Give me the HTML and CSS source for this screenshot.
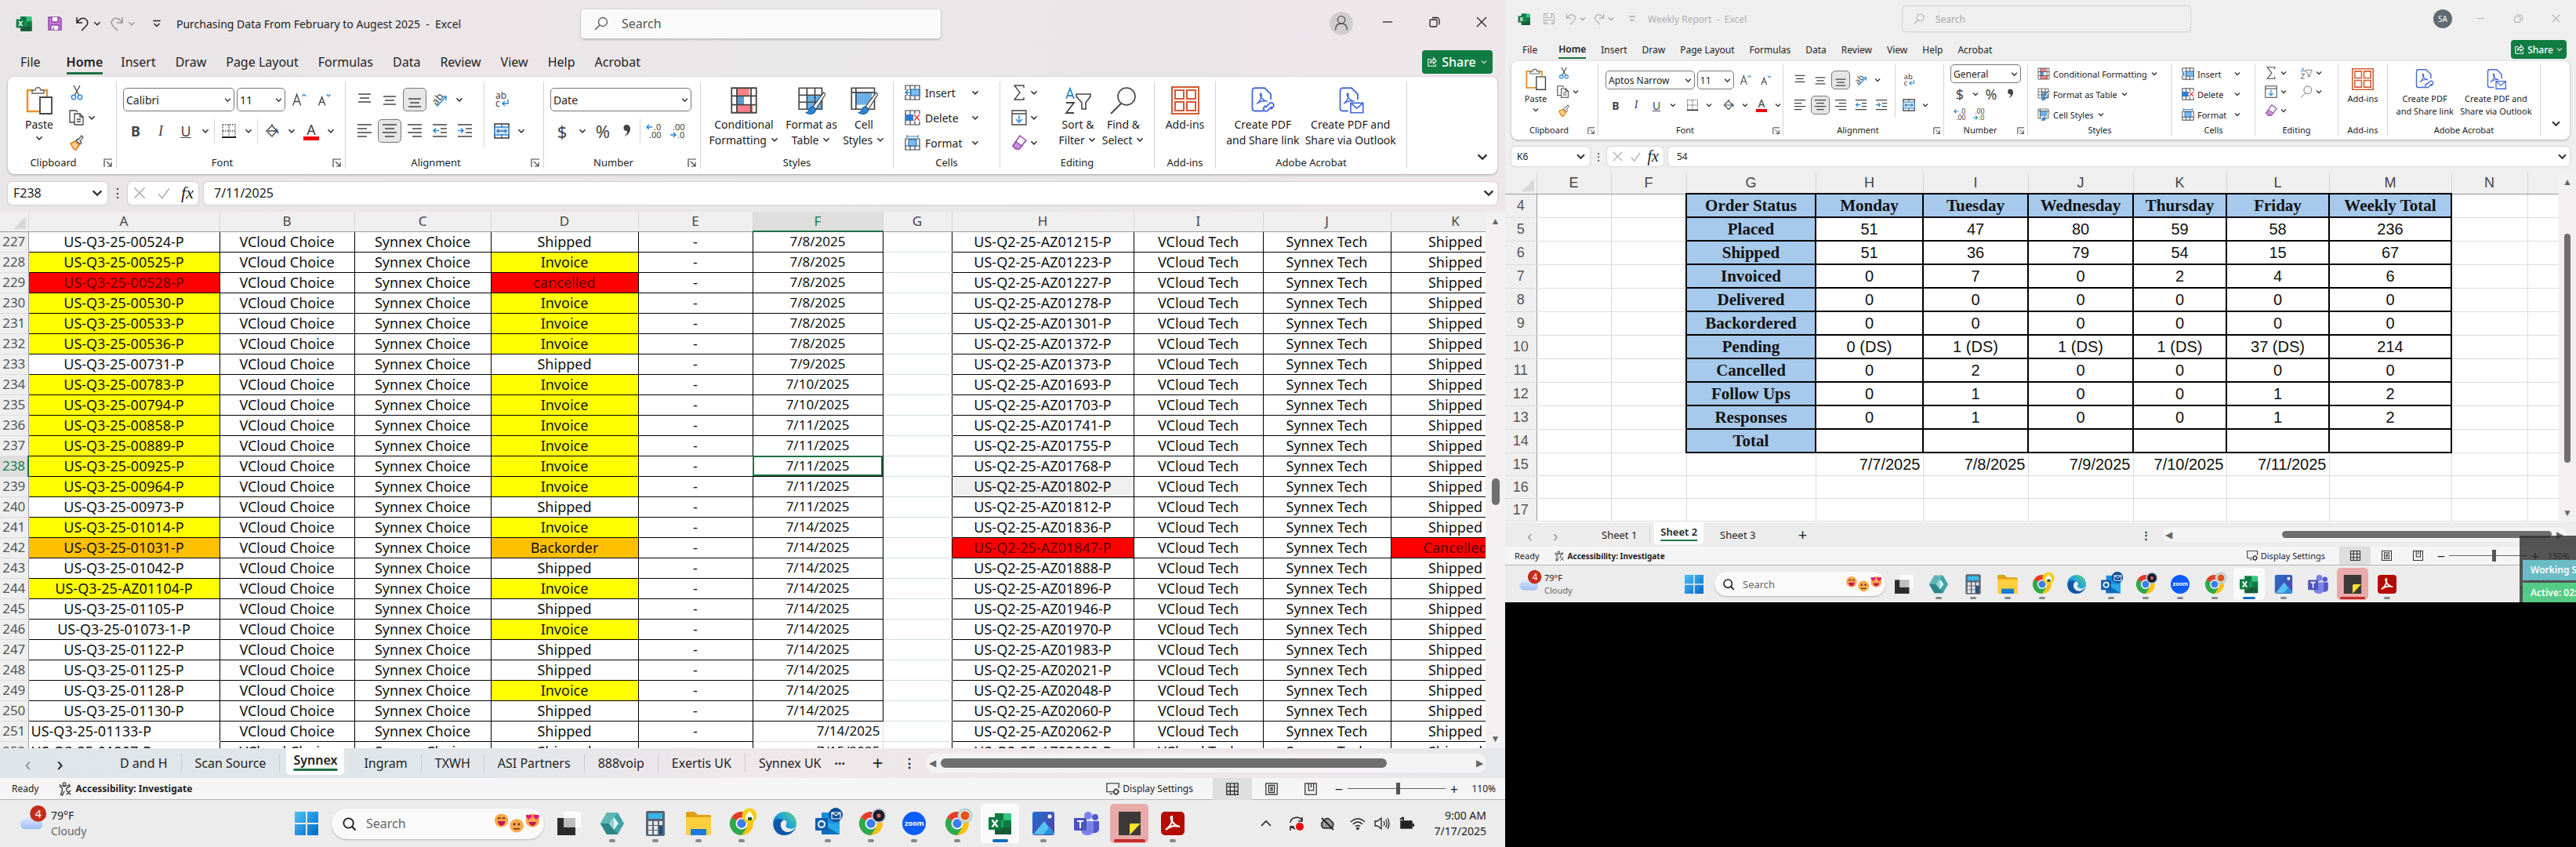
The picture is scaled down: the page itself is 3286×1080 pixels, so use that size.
FILE: index.html
```html
<!DOCTYPE html>
<html lang="en">
<head>
  <meta charset="UTF-8" />
  <meta name="viewport" content="width=device-width, initial-scale=1.0"/>
  <title>Purchasing Data - Excel</title>
  <link rel="stylesheet" href="styles.css">
</head>
<body>

  <svg class="sprite" aria-hidden="true">
    <defs>
      <linearGradient id="g-win" x1="0" y1="0" x2="1" y2="1"><stop offset="0" stop-color="#4cc2f5"/><stop offset="1" stop-color="#0067c8"/></linearGradient>
      <linearGradient id="g-edge" x1="0" y1="1" x2="1" y2="0"><stop offset="0" stop-color="#0c59a4"/><stop offset=".5" stop-color="#1b9de2"/><stop offset="1" stop-color="#5fd67b"/></linearGradient>
      <linearGradient id="g-photo" x1="0" y1="0" x2="1" y2="1"><stop offset="0" stop-color="#1f6fd0"/><stop offset="1" stop-color="#5b3fa8"/></linearGradient>
      <linearGradient id="g-cloud" x1="0" y1="0" x2="0" y2="1"><stop offset="0" stop-color="#f4f7ff"/><stop offset="1" stop-color="#9dbdf2"/></linearGradient>
    </defs>
  </svg>

  <!-- Icon set -->
  <svg class="icons" aria-hidden="true">
    <symbol id="chev" viewBox="0 0 10 10"><path d="M2 3.5 5 6.5 8 3.5" fill="none" stroke="#333" stroke-width="1.3"/></symbol>
    <symbol id="excel" viewBox="0 0 32 32"><path d="M9 3h14l7 7v19a1 1 0 0 1-1 1H9z" fill="#21a366"/><path d="M9 3h11v9H9z" fill="#107c41"/><path d="M20 3h9a1 1 0 0 1 1 1v8H20z" fill="#33c481"/><path d="M20 12h10v9H20z" fill="#107c41"/><path d="M9 21h21v8a1 1 0 0 1-1 1H9z" fill="#185c37"/><rect x="1" y="8" width="16" height="16" rx="1" fill="#107c41"/><path d="m5.5 11.5 7 9m0-9-7 9" stroke="#fff" stroke-width="2.2"/></symbol>
    <symbol id="save" viewBox="0 0 20 20"><path d="M2 2h14l2 2v14H2z" stroke="currentColor" stroke-width="1.4"/><path d="M6 2v6h8V2M5 18v-6h10v6M8 18v-3" fill="#f6f2f6" stroke="currentColor" stroke-width="1.3"/></symbol>
    <symbol id="undo" viewBox="0 0 20 20"><path d="M3 2v7h7M3.500 8.500C7 3 12 2 15 5s2 6-1 9l-5 5" fill="none" stroke="currentColor" stroke-width="1.5"/></symbol>
    <symbol id="redo" viewBox="0 0 20 20"><path d="M17 2v7h-7M16.500 8.500C13 3 8 2 5 5s-2 6 1 9l5 5" fill="none" stroke="currentColor" stroke-width="1.5"/></symbol>
    <symbol id="custom" viewBox="0 0 12 12"><path d="M2 3h8M3 6l3 3 3-3" fill="none" stroke="currentColor" stroke-width="1.3"/></symbol>
    <symbol id="glass" viewBox="0 0 20 20"><circle cx="12" cy="8" r="5.5" fill="none" stroke="currentColor" stroke-width="1.3"/><path d="m8 12-6 6" stroke="currentColor" stroke-width="1.5"/></symbol>
    <symbol id="person" viewBox="0 0 32 32"><circle cx="16" cy="16" r="16" fill="#cfcdcd"/><circle cx="16" cy="11" r="5" fill="none" stroke="#555" stroke-width="1.5"/><path d="M8 25c0-6 3-9 8-9s8 3 8 9" fill="none" stroke="#555" stroke-width="1.5"/></symbol>
    <symbol id="min" viewBox="0 0 16 16"><path d="M2 8h12" stroke="currentColor" stroke-width="1.3"/></symbol>
    <symbol id="max" viewBox="0 0 16 16"><rect x="2" y="5" width="9" height="9" rx="1.5" fill="none" stroke="currentColor" stroke-width="1.3"/><path d="M5 2.5h6a3 3 0 0 1 3 3v6" fill="none" stroke="currentColor" stroke-width="1.3"/></symbol>
    <symbol id="close" viewBox="0 0 16 16"><path d="m2 2 12 12m0-12L2 14" stroke="currentColor" stroke-width="1.3"/></symbol>
    <symbol id="check" viewBox="0 0 16 16"><path d="m2 9 4 5 8-11" fill="none" stroke="currentColor" stroke-width="1.3"/></symbol>
    <symbol id="share" viewBox="0 0 16 16"><path d="M6 4H2v10h11v-3M5 10c0-4 2-5 5-5V2l4 4.500-4 4V8c-2 0-4 0-5 2z" fill="none" stroke="#fff" stroke-width="1.2"/></symbol>

    <symbol id="paste" viewBox="0 0 36 36"><path d="M10 5H3v27h15" fill="none" stroke="#e8912d" stroke-width="2.5"/><path d="M22 5h6v8" fill="none" stroke="#e8912d" stroke-width="2.5"/><path d="M9 9V5h4a3.500 3.500 0 0 1 7 0h4v4z" fill="#fff" stroke="#666" stroke-width="1.5"/><path d="M19 14h15v21H19z" fill="#fff" stroke="#444" stroke-width="1.8"/></symbol>
    <symbol id="cut" viewBox="0 0 20 20"><path d="m6 1 7 13M14 1 7 14" stroke="#444" stroke-width="1.3"/><circle cx="6" cy="16" r="2.7" fill="none" stroke="#2b88d8" stroke-width="1.5"/><circle cx="14" cy="16" r="2.7" fill="none" stroke="#2b88d8" stroke-width="1.5"/></symbol>
    <symbol id="copy" viewBox="0 0 20 20"><path d="M7 16H1V1h8l2 2" fill="none" stroke="#444" stroke-width="1.3"/><path d="M7 5h7l4 4v10H7zM14 5v4h4M10 12h5M10 15h5" fill="#fff" stroke="#444" stroke-width="1.3"/></symbol>
    <symbol id="painter" viewBox="0 0 20 20"><path d="m2 11 6-3 5 5-4 6-3-1z" fill="#fbd08f" stroke="#e07b1a" stroke-width="1.5"/><path d="m9 7 5 5 2-2-2-2 4-5-2-2-4 5-1-1z" fill="#fff" stroke="#444" stroke-width="1.2"/></symbol>
    <symbol id="launch" viewBox="0 0 12 12"><path d="M1 11V1h10M4 4l6 6M10 5v5H5" fill="none" stroke="#444" stroke-width="1.2"/></symbol>
    <symbol id="borders" viewBox="0 0 20 20"><path d="M2 2h16v15M2 2v15M10 2v15M2 10h16" fill="none" stroke="#444" stroke-width="1.3" stroke-dasharray="1.5 1.5"/><path d="M1 18h18" stroke="#222" stroke-width="2"/></symbol>
    <symbol id="bucket" viewBox="0 0 20 20"><path d="m3 10 7-7 6 7-6 7zM10 3V1M5 10h10" fill="none" stroke="#444" stroke-width="1.4"/><path d="M15 6c3 2 4 5 3 8-2-1-2-4-3-8z" fill="#2b6cb0"/></symbol>
    <symbol id="a-up" viewBox="0 0 24 24"><path d="m2 21 6-17 6 17M4 15h8" fill="none" stroke="#444" stroke-width="1.6"/><path d="m16 7 3-3 3 3" fill="none" stroke="#2b88d8" stroke-width="1.6"/></symbol>
    <symbol id="a-down" viewBox="0 0 24 24"><path d="m3 21 5-13 5 13M5 16h6" fill="none" stroke="#444" stroke-width="1.6"/><path d="m15 4 3 3 3-3" fill="none" stroke="#2b88d8" stroke-width="1.6"/></symbol>
    <symbol id="al-top" viewBox="0 0 20 20"><path d="M2 3h16M4 8h12M2 13h16" stroke="#444" stroke-width="1.5"/></symbol>
    <symbol id="al-mid" viewBox="0 0 20 20"><path d="M2 6h16M4 11h12M2 16h16" stroke="#444" stroke-width="1.5"/></symbol>
    <symbol id="al-bot" viewBox="0 0 20 20"><path d="M2 9h16M4 14h12M2 19h16" stroke="#444" stroke-width="1.5"/></symbol>
    <symbol id="al-left" viewBox="0 0 20 20"><path d="M1 2h18M1 7h12M1 12h18M1 17h12" stroke="#444" stroke-width="1.5"/></symbol>
    <symbol id="al-center" viewBox="0 0 20 20"><path d="M1 2h18M4 7h12M1 12h18M4 17h12" stroke="#444" stroke-width="1.5"/></symbol>
    <symbol id="al-right" viewBox="0 0 20 20"><path d="M1 2h18M7 7h12M1 12h18M7 17h12" stroke="#444" stroke-width="1.5"/></symbol>
    <symbol id="outdent" viewBox="0 0 20 20"><path d="M1 2h18M11 7h8M11 12h8M1 17h18" stroke="#444" stroke-width="1.5"/><path d="M9 9.500H2m3-3-3 3 3 3" fill="none" stroke="#2b88d8" stroke-width="1.5"/></symbol>
    <symbol id="indent" viewBox="0 0 20 20"><path d="M1 2h18M11 7h8M11 12h8M1 17h18" stroke="#444" stroke-width="1.5"/><path d="M1 9.500h7m-3-3 3 3-3 3" fill="none" stroke="#2b88d8" stroke-width="1.5"/></symbol>
    <symbol id="orient" viewBox="0 0 20 20"><text x="0" y="14" font-size="13" fill="#444" transform="rotate(-50 7 10)">ab</text><path d="M6 19 18 6m-5 0h5v5" fill="none" stroke="#2b88d8" stroke-width="1.4"/></symbol>
    <symbol id="wrap" viewBox="0 0 20 20"><text x="2" y="9" font-size="12" fill="#444">ab</text><text x="2" y="19" font-size="12" fill="#444">c</text><path d="M18 10v5h-7m3-3-3 3 3 3" fill="none" stroke="#2b88d8" stroke-width="1.5"/></symbol>
    <symbol id="merge" viewBox="0 0 20 20"><path d="M1 1h18v18H1z" fill="#fff" stroke="#333" stroke-width="1.5"/><path d="M1 5h18v10H1z" fill="#cfe6f8" stroke="#2b88d8" stroke-width="1.3"/><path d="M10 1v4M10 15v4" stroke="#333"/><path d="M4 10h12M6 8l-2 2 2 2m8-4 2 2-2 2" fill="none" stroke="#2b6cb0" stroke-width="1.3"/></symbol>
    <symbol id="dec-more" viewBox="0 0 20 20"><path d="M8 5H1m3-3L1 5l3 3" fill="none" stroke="#2b88d8" stroke-width="1.5"/><text x="10" y="9" font-size="11" fill="#444">.0</text><text x="4" y="19" font-size="11" fill="#444">.00</text></symbol>
    <symbol id="dec-less" viewBox="0 0 20 20"><text x="4" y="9" font-size="11" fill="#444">.00</text><path d="M1 15h7m-3-3 3 3-3 3" fill="none" stroke="#2b88d8" stroke-width="1.5"/><text x="10" y="19" font-size="11" fill="#444">.0</text></symbol>
    <symbol id="comma" viewBox="0 0 20 20"><path d="M10 2a4 4 0 1 0 1 8c0 3-1 5-4 7 6-2 8-6 8-10 0-3-2-5-5-5z" fill="#444"/></symbol>

    <symbol id="cond" viewBox="0 0 32 32"><path d="M2 2h28v28H2z" fill="#fff"/><path d="M8 2h14v9H8zM8 21h18v9H8z" fill="#ff8288"/><path d="M8 11h8v10H8z" fill="#5b9bd5"/><path d="M2 2h28v28H2zM2 11h28M2 21h28M8 2v28M24 2v28" fill="none" stroke="#444" stroke-width="1.6"/></symbol>
    <symbol id="fmt-table" viewBox="0 0 32 32"><path d="M2 2h26v24H2z" fill="#fff"/><path d="M11 10h17v16H11z" fill="#69b0e8"/><path d="M2 2h26v24H2zM2 10h26M2 18h26M11 2v24M20 2v24" fill="none" stroke="#444" stroke-width="1.5"/><path d="m30 7-12 16 3 3L32 9z" fill="#fff" stroke="#444"/><path d="M17 23c-4 1-2 6-7 7 5 3 11 1 11-4z" fill="#2b88d8" stroke="#1f5f9f"/></symbol>
    <symbol id="cell-style" viewBox="0 0 32 32"><path d="M2 2h26v24H2z" fill="#fff"/><path d="M7 7h18v14H7z" fill="#69b0e8"/><path d="M2 2h26v24H2zM2 7h26M7 2v24" fill="none" stroke="#444" stroke-width="1.5"/><path d="m30 7-12 16 3 3L32 9z" fill="#fff" stroke="#444"/><path d="M17 23c-4 1-2 6-7 7 5 3 11 1 11-4z" fill="#2b88d8" stroke="#1f5f9f"/></symbol>
    <symbol id="ins" viewBox="0 0 20 20"><path d="M1 1h18v18H1zM7 1v18M13 1v18M1 7h18M1 13h18" fill="#fff" stroke="#444" stroke-width="1.2"/><path d="M8 6h11v8H8z" fill="#7dbcf0" stroke="#1f5f9f"/><path d="M0 7h7v6H0z" fill="#fff"/><path d="M8 10H1m3-3-3 3 3 3" fill="none" stroke="#2b88d8" stroke-width="1.5"/></symbol>
    <symbol id="del" viewBox="0 0 20 20"><path d="M1 1h18v18H1zM7 1v18M13 1v18M1 7h18M1 13h18" fill="#fff" stroke="#444" stroke-width="1.2"/><path d="M1 6h10v8H1z" fill="#2b7cd3"/><path d="M11 5h9v10h-9z" fill="#fff"/><path d="m12 6 7 8m0-8-7 8" stroke="#e03c31" stroke-width="1.5"/></symbol>
    <symbol id="fmt" viewBox="0 0 20 20"><path d="M1 5h18v14H1zM7 5v14M13 5v14M1 14h18" fill="#fff" stroke="#444" stroke-width="1.2"/><path d="M5 6h10v8H5z" fill="#7dbcf0" stroke="#1f5f9f"/><path d="M3 2h14M3 0v4M17 0v4" stroke="#2b88d8" stroke-width="1.2"/></symbol>
    <symbol id="sum" viewBox="0 0 20 20"><path d="M16 4V1H4l7 9-7 9h12v-3" fill="none" stroke="#444" stroke-width="1.4"/></symbol>
    <symbol id="filldown" viewBox="0 0 20 20"><path d="M1 1h18v18H1zM1 5h18" fill="#fff" stroke="#444" stroke-width="1.3"/><path d="M10 7v9m-4-4 4 4 4-4" fill="none" stroke="#2b88d8" stroke-width="1.5"/></symbol>
    <symbol id="erase" viewBox="0 0 20 20"><path d="M11 1 19 7l-9 11H6L2 14z" fill="#fff" stroke="#8f3ea8" stroke-width="1.4"/><path d="m6 9 8 5-4 4H6l-4-4z" fill="#c792d8" stroke="#8f3ea8" stroke-width="1.2"/></symbol>
    <symbol id="sort" viewBox="0 0 36 36"><path d="m3 16 5-13 5 13M5 12h6" fill="none" stroke="#2b88d8" stroke-width="1.8"/><path d="M3 21h10L3 34h10" fill="none" stroke="#444" stroke-width="1.8"/><path d="M16 10h18v3l-6 8v8h-5v-8l-7-8z" fill="#fff" stroke="#444" stroke-width="1.6"/></symbol>
    <symbol id="find" viewBox="0 0 36 36"><circle cx="22" cy="13" r="11" fill="#fafafa" stroke="#444" stroke-width="1.6"/><path d="M15 22 2 35" stroke="#444" stroke-width="1.8"/></symbol>
    <symbol id="addins" viewBox="0 0 36 36"><path d="M1 1h34v34H1zM5 5h11v11H5zM20 5h11v11H20zM5 20h11v11H5zM20 20h11v11H20z" fill="none" stroke="#d65a31" stroke-width="2"/></symbol>
    <symbol id="pdf-link" viewBox="0 0 32 32"><path d="M17 28H7a3 3 0 0 1-3-3V5a3 3 0 0 1 3-3h11l7 7v6" fill="none" stroke="#4468d8" stroke-width="1.6"/><path d="M9 20c5-4 6-9 5-12-3 0 0 8 7 9-5-1-9 0-12 3z" fill="none" stroke="#4468d8" stroke-width="1.3"/><path d="m19 24 5-5a3 3 0 0 1 4 4l-3 3M26 23l-5 5a3 3 0 0 1-4-4l2-2" fill="none" stroke="#4468d8" stroke-width="1.6"/></symbol>
    <symbol id="pdf-mail" viewBox="0 0 32 32"><path d="M13 28H7a3 3 0 0 1-3-3V5a3 3 0 0 1 3-3h10l7 7v6" fill="none" stroke="#4468d8" stroke-width="1.6"/><path d="M8 20c5-4 6-9 5-12-3 0 0 8 7 9-5-1-9 0-12 3z" fill="none" stroke="#4468d8" stroke-width="1.3"/><path d="M16 19h14v11H16zl7 6 7-6" fill="#fff" stroke="#4468d8" stroke-width="1.5"/></symbol>

    <symbol id="a11y" viewBox="0 0 20 20"><circle cx="9" cy="3" r="2" fill="none" stroke="#333" stroke-width="1.3"/><path d="M2 4c4 3 10 3 14 0l1 2-5 3v3M6 9 2 6M6 8v4l-2 6 2 1 3-6M12 12l6 6m0-6-6 6" fill="none" stroke="#333" stroke-width="1.4"/></symbol>
    <symbol id="display" viewBox="0 0 20 20"><path d="M9 14H1V2h17v7M5 17h4" fill="none" stroke="#444" stroke-width="1.5"/><circle cx="14" cy="14" r="3" fill="none" stroke="#333" stroke-width="1.5"/><path d="M14 9v2M14 17v2M9 14h2M17 14h2M11 11l1 1M16 16l1 1M17 11l-1 1M12 16l-1 1" stroke="#333" stroke-width="1.5"/></symbol>
    <symbol id="v-normal" viewBox="0 0 20 20"><path d="M2 2h16v16H2zM7 2v16M13 2v16M2 7h16M2 13h16" fill="none" stroke="#333" stroke-width="1.5"/></symbol>
    <symbol id="v-page" viewBox="0 0 20 20"><path d="M2 2h16v16H2zM6 5h8v10H6zM8 8h4M8 10h4M8 12h4" fill="none" stroke="#333" stroke-width="1.4"/></symbol>
    <symbol id="v-break" viewBox="0 0 20 20"><path d="M2 2h16v16H2zM7 2v10h7V2M10.500 2v6" fill="none" stroke="#333" stroke-width="1.4"/></symbol>

    <!-- Taskbar -->
    <symbol id="weather" viewBox="0 0 40 40"><path d="M10 33a7 7 0 0 1 0-14c1-6 6-8 11-7 5 1 7 5 7 8 6 1 7 13-1 13z" fill="url(#g-cloud)"/><circle cx="27" cy="12" r="11" fill="#c42b1c"/><text x="23" y="18" font-size="15" fill="#fff">4</text></symbol>
    <symbol id="start" viewBox="0 0 40 40"><path d="M5 5h14v14H5zM21 5h14v14H21zM5 21h14v14H5zM21 21h14v14H21z" fill="url(#g-win)"/></symbol>
    <symbol id="tb-glass" viewBox="0 0 20 20"><circle cx="9" cy="9" r="6.5" fill="none" stroke="#222" stroke-width="2"/><path d="m13.500 13.500 5 5" stroke="#222" stroke-width="2.2"/></symbol>
    <symbol id="faces" viewBox="0 0 60 30"><g fill="#f9a94b"><circle cx="9" cy="11" r="9"/><circle cx="29" cy="18" r="9"/><circle cx="50" cy="11" r="9"/></g><path d="M4 9q2-3 4 0M10 9q2-3 4 0" stroke="#6b2d12" stroke-width="1.5" fill="none"/><path d="M4 12h10q-1 6-5 6t-5-6M45 13h10q-1 5-5 5t-5-5" fill="#c2185b"/><circle cx="26" cy="16" r="1.5" fill="#5a2b10"/><circle cx="32" cy="16" r="1.5" fill="#5a2b10"/><path d="M25 22h8" stroke="#5a2b10" stroke-width="1.5"/><path d="m45 10-4-4q0-4 4-2 4-2 4 2zM55 10l-4-4q0-4 4-2 4-2 4 2z" fill="#e6177a"/></symbol>
    <symbol id="taskview" viewBox="0 0 40 40"><path d="M5 13h23v22H5z" fill="#2b2b2b"/><path d="M13 5h22v20H13z" fill="#fff" opacity=".8"/><path d="M13 13h15v12H13z" fill="#bdbdbd"/></symbol>
    <symbol id="hex" viewBox="0 0 40 40"><path d="M13 6h14l8 14-8 14H13L5 20z" fill="#3fa3a5"/><path d="M13 6h14l-5 7-7 7-10 0z" fill="#5fb5b6"/><path d="M13 34h14l-5-7-7-7H5z" fill="#2b8588"/><path d="m22 12 6 8-6 8-6-8z" fill="#dff3f3"/><path d="M22 12v16l-6-8z" fill="#8fcfd0"/></symbol>
    <symbol id="calc" viewBox="0 0 40 40"><rect x="8" y="4" width="24" height="32" rx="2" fill="#5a6570"/><path d="M11 7h18v7H11z" fill="#3bb5e8"/><path d="M11 17h5v5h-5zM18 17h5v5h-5zM25 17h4v5h-4zM11 23h5v5h-5zM18 23h5v5h-5zM11 29h5v5h-5zM18 29h5v5h-5z" fill="#e4e8eb"/><path d="M25 23h4v11h-4z" fill="#1c4c8c"/></symbol>
    <symbol id="folder" viewBox="0 0 40 40"><path d="M4 7q0-2 2-2h9l4 4h15q2 0 2 2v4H4z" fill="#e0a012"/><path d="M4 12h32v21q0 2-2 2H6q-2 0-2-2z" fill="#ffcf3f"/><path d="M10 27h20v8H10z" fill="#1b7bd6"/></symbol>
    <symbol id="chrome" viewBox="0 0 40 40"><circle cx="20" cy="20" r="15" fill="#fbc116"/><path d="M20 20 7 12.500A15 15 0 0 1 33 12.500z" fill="#e33b2e"/><path d="M20 20 7 12.500A15 15 0 0 0 20 35l6-9z" fill="#2da94f"/><circle cx="20" cy="20" r="7.5" fill="#fff"/><circle cx="20" cy="20" r="5.7" fill="#3b7ded"/></symbol>
    <symbol id="chrome-y" viewBox="0 0 40 40"><use href="#chrome"/><circle cx="30" cy="10" r="9.5" fill="#f2cf1d"/><path d="M30 4q7 8 4 11h-8q-3-3 4-11z" fill="#fff"/><path d="M28 12h5v4h-5z" fill="#22543d"/></symbol>
    <symbol id="chrome-d" viewBox="0 0 40 40"><use href="#chrome"/><circle cx="30" cy="10" r="9.5" fill="#b7c9d8"/><circle cx="30" cy="10" r="7.5" fill="#1c1c2c"/><circle cx="30" cy="10" r="2.5" fill="#e86060"/></symbol>
    <symbol id="chrome-o" viewBox="0 0 40 40"><use href="#chrome"/><circle cx="30" cy="10" r="9.5" fill="#a9cfd2"/><circle cx="30" cy="10" r="7.5" fill="#e8dcd0"/><circle cx="30" cy="10" r="5.5" fill="#e2541b"/></symbol>
    <symbol id="edge" viewBox="0 0 40 40"><circle cx="20" cy="20" r="15" fill="url(#g-edge)"/><path d="M7 17c-3 9 2 18 12 18 6 0 11-3 14-8-6 3-15 1-15-6 0-2 1-3 2-4-4-4-11-4-13 0z" fill="#0d57a8"/><path d="M35 22c-1 4-6 6-11 4-3-1-3-3-2-5 1-3-1-6-4-5-6 3-3 15 6 15 5 0 9-4 11-9z" fill="#eceded"/></symbol>
    <symbol id="outlook" viewBox="0 0 40 40"><path d="M12 6h23v28H12z" fill="#1490df"/><path d="M12 20h23v14H12z" fill="#28a8ea"/><path d="m12 20 23 14H12z" fill="#0f6cbd"/><rect x="4" y="13" width="16" height="16" rx="1" fill="#0f5fae"/><circle cx="12" cy="21" r="4" fill="none" stroke="#fff" stroke-width="2"/><circle cx="30" cy="9" r="9" fill="#0a4c97"/><path d="M25 6h11v8H25zl5.500 4L36 6" fill="none" stroke="#fff" stroke-width="1.2"/></symbol>
    <symbol id="zoom" viewBox="0 0 40 40"><circle cx="20" cy="20" r="15" fill="#0b5cff"/><text x="8" y="23" font-size="9" font-weight="700" fill="#fff">zoom</text></symbol>
    <symbol id="tb-excel" viewBox="-4 -4 40 40"><use href="#excel" width="32" height="32"/></symbol>
    <symbol id="photos" viewBox="0 0 40 40"><rect x="6" y="5" width="28" height="30" rx="3" fill="url(#g-photo)"/><path d="m7 34 14-17 13 17z" fill="#53c2f2"/><path d="m20 34 8-10 6 8v2z" fill="#2b8fe0"/><circle cx="28" cy="11" r="2.5" fill="#fff"/></symbol>
    <symbol id="teams" viewBox="0 0 40 40"><circle cx="22" cy="10" r="5" fill="#7b83eb"/><circle cx="31" cy="12" r="4" fill="#5059c9"/><path d="M27 17h9v11q-2 5-8 4z" fill="#5059c9"/><path d="M14 17h15v12q-1 6-8 6t-8-6z" fill="#7b83eb"/><rect x="4" y="13" width="16" height="16" rx="1" fill="#4b53bc"/><path d="M8 17h8M12 17v9" stroke="#fff" stroke-width="2"/></symbol>
    <symbol id="sticky" viewBox="0 0 40 40"><path d="M6 5h28v15L20 35H6z" fill="#3b3a39"/><path d="M34 20 20 35V22q0-2 2-2z" fill="#f8e02e"/><path d="M34 20v15H20z" fill="#3b3a39"/></symbol>
    <symbol id="acrobat" viewBox="0 0 40 40"><rect x="5" y="5" width="30" height="30" rx="5" fill="#b30b00"/><path d="M11 28c7-5 9-11 8-17-4 0 1 12 10 13-7-2-13 0-18 4z" fill="none" stroke="#fff" stroke-width="2.2"/></symbol>
    <symbol id="t-up" viewBox="0 0 20 20"><path d="m4 13 6-6 6 6" fill="none" stroke="#222" stroke-width="1.6"/></symbol>
    <symbol id="t-sync" viewBox="0 0 20 20"><path d="M2 9a8 7 0 0 1 15-3m0-4v5h-5M8 17l-6-3v5m0-5h5" fill="none" stroke="#222" stroke-width="1.5"/><circle cx="14" cy="14" r="5" fill="#f00000"/></symbol>
    <symbol id="t-off" viewBox="0 0 20 20"><path d="M6 16a5 5 0 0 1-1-9q5-7 10 0a5 5 0 0 1 0 9z" fill="#999" stroke="#222" stroke-width="1.4"/><path d="m3 3 15 15" stroke="#222" stroke-width="1.8"/></symbol>
    <symbol id="t-wifi" viewBox="0 0 20 20"><path d="M1 8q9-8 18 0M4 11q6-6 12 0M7 14q3-3 6 0" fill="none" stroke="#222" stroke-width="1.6"/><circle cx="10" cy="16.5" r="1.8" fill="#222"/></symbol>
    <symbol id="t-vol" viewBox="0 0 20 20"><path d="M1 7h3l5-4v14l-5-4H1zM12 7q2 3 0 6M14.500 5q3.500 5 0 10M17 3q4 7 0 14" fill="none" stroke="#222" stroke-width="1.3"/></symbol>
    <symbol id="t-bat" viewBox="0 0 20 20"><path d="M3 7h14v9H3z" fill="#222" stroke="#222" stroke-width="1.5"/><path d="M18 10h2v4h-2z" fill="#222"/><path d="M6 2v4M2 5l4-3" stroke="#222" stroke-width="2"/></symbol>
  </svg>

  <!-- Parts both windows share -->
  <template id="tpl-tabs">
    <nav class="menu">
      <a href="#">File</a><a href="#" class="on">Home</a><a href="#">Insert</a><a href="#">Draw</a><a href="#">Page Layout</a><a href="#">Formulas</a><a href="#">Data</a><a href="#">Review</a><a href="#">View</a><a href="#">Help</a><a href="#">Acrobat</a>
      <button class="share"><svg><use href="#share"/></svg>Share<svg class="chev white"><use href="#chev"/></svg></button>
    </nav>
  </template>

  <template id="tpl-basic">
    <section class="group g-clip">
      <div class="group-body">
        <button class="big"><svg><use href="#paste"/></svg><span>Paste</span><svg class="chev"><use href="#chev"/></svg></button>
        <div class="stack">
          <button class="tool" aria-label="Cut"><svg><use href="#cut"/></svg></button>
          <button class="tool wide" aria-label="Copy"><svg><use href="#copy"/></svg><svg class="chev"><use href="#chev"/></svg></button>
          <button class="tool" aria-label="Format Painter"><svg><use href="#painter"/></svg></button>
        </div>
      </div>
      <footer>Clipboard<svg><use href="#launch"/></svg></footer>
    </section>
    <section class="group g-font">
      <div class="group-body rows">
        <div class="row">
          <select class="font-name" aria-label="Font"><option>Calibri</option></select>
          <select class="font-size" aria-label="Font size"><option>11</option></select>
          <button class="tool" aria-label="Increase font size"><svg><use href="#a-up"/></svg></button>
          <button class="tool" aria-label="Decrease font size"><svg><use href="#a-down"/></svg></button>
        </div>
        <div class="row">
          <button class="tool"><b>B</b></button><button class="tool"><i>I</i></button><button class="tool"><u>U</u></button>
          <svg class="chev"><use href="#chev"/></svg><hr>
          <button class="tool" aria-label="Borders"><svg><use href="#borders"/></svg></button>
          <svg class="chev"><use href="#chev"/></svg><hr>
          <button class="tool" aria-label="Fill color"><svg><use href="#bucket"/></svg></button>
          <svg class="chev"><use href="#chev"/></svg>
          <button class="tool"><span class="ink">A</span></button>
          <svg class="chev"><use href="#chev"/></svg>
        </div>
      </div>
      <footer>Font<svg><use href="#launch"/></svg></footer>
    </section>
    <section class="group g-align">
      <div class="group-body">
        <div class="rows">
          <div class="row">
            <button class="tool" aria-label="Top align"><svg><use href="#al-top"/></svg></button>
            <button class="tool" aria-label="Middle align"><svg><use href="#al-mid"/></svg></button>
            <button class="tool on" aria-label="Bottom align"><svg><use href="#al-bot"/></svg></button>
            <button class="tool" aria-label="Orientation"><svg><use href="#orient"/></svg></button>
            <svg class="chev"><use href="#chev"/></svg>
          </div>
          <div class="row">
            <button class="tool" aria-label="Align left"><svg><use href="#al-left"/></svg></button>
            <button class="tool on" aria-label="Center"><svg><use href="#al-center"/></svg></button>
            <button class="tool" aria-label="Align right"><svg><use href="#al-right"/></svg></button>
            <button class="tool" aria-label="Decrease indent"><svg><use href="#outdent"/></svg></button>
            <button class="tool" aria-label="Increase indent"><svg><use href="#indent"/></svg></button>
          </div>
        </div>
        <div class="rows wraps">
          <div class="row"><button class="tool" aria-label="Wrap text"><svg><use href="#wrap"/></svg></button></div>
          <div class="row"><button class="tool" aria-label="Merge and center"><svg><use href="#merge"/></svg></button><svg class="chev"><use href="#chev"/></svg></div>
        </div>
      </div>
      <footer>Alignment<svg><use href="#launch"/></svg></footer>
    </section>
  </template>

  <template id="tpl-cells">
    <section class="group g-cells">
      <div class="group-body">
        <div class="stack">
          <button class="line"><svg><use href="#ins"/></svg><span>Insert</span><svg class="chev"><use href="#chev"/></svg></button>
          <button class="line"><svg><use href="#del"/></svg><span>Delete</span><svg class="chev"><use href="#chev"/></svg></button>
          <button class="line"><svg><use href="#fmt"/></svg><span>Format</span><svg class="chev"><use href="#chev"/></svg></button>
        </div>
      </div>
      <footer>Cells</footer>
    </section>
  </template>

  <template id="tpl-acrobat">
    <section class="group g-addins">
      <div class="group-body"><button class="big"><svg><use href="#addins"/></svg><span>Add-ins</span></button></div>
      <footer>Add-ins</footer>
    </section>
    <section class="group g-acro">
      <div class="group-body">
        <button class="big"><svg><use href="#pdf-link"/></svg><span>Create PDF<br>and Share link</span></button>
        <button class="big"><svg><use href="#pdf-mail"/></svg><span>Create PDF and<br>Share via Outlook</span></button>
      </div>
      <footer>Adobe Acrobat</footer>
    </section>
    <button class="collapse" aria-label="Collapse ribbon"><svg><use href="#chev"/></svg></button>
  </template>

  <template id="tpl-taskbar">
    <footer class="taskbar">
      <div class="weather"><svg><use href="#weather"/></svg><p>79°F<br><span>Cloudy</span></p></div>
      <button class="app" aria-label="Start"><svg><use href="#start"/></svg></button>
      <label class="tb-search"><svg><use href="#tb-glass"/></svg><input type="text" placeholder="Search" aria-label="Search Windows"><svg class="faces"><use href="#faces"/></svg></label>
      <button class="app" aria-label="Task view"><svg><use href="#taskview"/></svg></button>
      <button class="app run" aria-label="Hexnode"><svg><use href="#hex"/></svg></button>
      <button class="app run" aria-label="Calculator"><svg><use href="#calc"/></svg></button>
      <button class="app run" aria-label="File Explorer"><svg><use href="#folder"/></svg></button>
      <button class="app run" aria-label="Chrome"><svg><use href="#chrome-y"/></svg></button>
      <button class="app" aria-label="Edge"><svg><use href="#edge"/></svg></button>
      <button class="app run" aria-label="Outlook"><svg><use href="#outlook"/></svg></button>
      <button class="app run" aria-label="Chrome"><svg><use href="#chrome-d"/></svg></button>
      <button class="app run" aria-label="Zoom"><svg><use href="#zoom"/></svg></button>
      <button class="app run" aria-label="Chrome"><svg><use href="#chrome-o"/></svg></button>
      <button class="app run active" aria-label="Excel"><svg><use href="#tb-excel"/></svg></button>
      <button class="app run" aria-label="Photos"><svg><use href="#photos"/></svg></button>
      <button class="app" aria-label="Teams"><svg><use href="#teams"/></svg></button>
      <button class="app run alert" aria-label="Sticky Notes"><svg><use href="#sticky"/></svg></button>
      <button class="app run" aria-label="Acrobat"><svg><use href="#acrobat"/></svg></button>
      <div class="tray"><svg><use href="#t-up"/></svg><svg><use href="#t-sync"/></svg><svg><use href="#t-off"/></svg><svg><use href="#t-wifi"/></svg><svg><use href="#t-vol"/></svg><svg><use href="#t-bat"/></svg></div>
      <p class="clock">9:00 AM<br>7/17/2025</p>
    </footer>
  </template>

  <template id="tpl-status">
    <div class="status">
      <span>Ready</span>
      <svg><use href="#a11y"/></svg><b>Accessibility: Investigate</b>
      <button class="display"><svg><use href="#display"/></svg>Display Settings</button>
      <button class="view on" aria-label="Normal"><svg><use href="#v-normal"/></svg></button>
      <button class="view" aria-label="Page Layout"><svg><use href="#v-page"/></svg></button>
      <button class="view" aria-label="Page Break Preview"><svg><use href="#v-break"/></svg></button>
      <span class="sign">−</span><input type="range" aria-label="Zoom" min="0" max="100"><span class="sign">+</span>
      <span class="pct"></span>
    </div>
  </template>

  <main class="desktop">
    <div class="screen left" data-zoom="110%" data-slider="52">
      <header class="title">
        <svg class="logo"><use href="#excel"/></svg>
        <svg class="qa save"><use href="#save"/></svg>
        <svg class="qa"><use href="#undo"/></svg><svg class="chev"><use href="#chev"/></svg>
        <svg class="qa dim"><use href="#redo"/></svg><svg class="chev dim"><use href="#chev"/></svg>
        <svg class="custom"><use href="#custom"/></svg>
        <h1>Purchasing Data From February to Augest 2025 &nbsp;-&nbsp; Excel</h1>
        <label class="search"><svg><use href="#glass"/></svg><input type="text" placeholder="Search" aria-label="Search"></label>
        <svg class="avatar"><use href="#person"/></svg>
        <button class="win" aria-label="Minimize"><svg><use href="#min"/></svg></button>
        <button class="win" aria-label="Restore"><svg><use href="#max"/></svg></button>
        <button class="win" aria-label="Close"><svg><use href="#close"/></svg></button>
      </header>
      <div data-tpl="tabs"></div>
      <div class="ribbon">
        <div data-tpl="basic"></div>
        <section class="group g-num">
          <div class="group-body rows">
            <div class="row"><select aria-label="Number format"><option>Date</option></select></div>
            <div class="row">
              <button class="tool"><span class="sym">$</span></button><svg class="chev"><use href="#chev"/></svg>
              <button class="tool"><span class="sym">%</span></button>
              <button class="tool" aria-label="Comma style"><svg><use href="#comma"/></svg></button><hr>
              <button class="tool" aria-label="Increase decimal"><svg><use href="#dec-more"/></svg></button>
              <button class="tool" aria-label="Decrease decimal"><svg><use href="#dec-less"/></svg></button>
            </div>
          </div>
          <footer>Number<svg><use href="#launch"/></svg></footer>
        </section>
        <section class="group g-styles">
          <div class="group-body">
            <button class="big"><svg><use href="#cond"/></svg><span>Conditional<br>Formatting <svg class="chev"><use href="#chev"/></svg></span></button>
            <button class="big"><svg><use href="#fmt-table"/></svg><span>Format as<br>Table <svg class="chev"><use href="#chev"/></svg></span></button>
            <button class="big"><svg><use href="#cell-style"/></svg><span>Cell<br>Styles <svg class="chev"><use href="#chev"/></svg></span></button>
          </div>
          <footer>Styles</footer>
        </section>
        <div data-tpl="cells"></div>
        <section class="group g-edit">
          <div class="group-body">
            <div class="stack">
              <button class="tool wide" aria-label="AutoSum"><svg><use href="#sum"/></svg><svg class="chev"><use href="#chev"/></svg></button>
              <button class="tool wide" aria-label="Fill"><svg><use href="#filldown"/></svg><svg class="chev"><use href="#chev"/></svg></button>
              <button class="tool wide" aria-label="Clear"><svg><use href="#erase"/></svg><svg class="chev"><use href="#chev"/></svg></button>
            </div>
            <button class="big"><svg><use href="#sort"/></svg><span>Sort &amp;<br>Filter <svg class="chev"><use href="#chev"/></svg></span></button>
            <button class="big"><svg><use href="#find"/></svg><span>Find &amp;<br>Select <svg class="chev"><use href="#chev"/></svg></span></button>
          </div>
          <footer>Editing</footer>
        </section>
        <div data-tpl="acrobat"></div>
      </div>
      <div class="formula">
        <div class="namebox"><input type="text" value="F238" aria-label="Name box"><svg><use href="#chev"/></svg></div>
        <span class="grip">⋮</span>
        <div class="fx"><svg><use href="#close"/></svg><svg><use href="#check"/></svg><i>fx</i></div>
        <div class="bar"><input type="text" value="7/11/2025" aria-label="Formula bar"><svg><use href="#chev"/></svg></div>
      </div>
      <div class="sheet">
        <div class="clip"><table id="orders"></table></div>
        <div class="vscroll"><i>▲</i><div class="thumb"></div><i>▼</i></div>
      </div>
      <div class="tabs">
        <span class="nav dim">‹</span><span class="nav">›</span>
        <a href="#">D and H</a><a href="#">Scan Source</a><a href="#" class="on">Synnex</a><a href="#">Ingram</a><a href="#">TXWH</a><a href="#">ASI Partners</a><a href="#">888voip</a><a href="#">Exertis UK</a><a href="#">Synnex UK</a>
        <span class="dots">···</span><span class="plus">+</span><span class="grip">⋮</span>
        <div class="hscroll"><i>◀</i><div class="track"><div class="thumb"></div></div><i>▶</i></div>
      </div>
      <div data-tpl="status"></div>
      <div data-tpl="taskbar"></div>
    </div>

    <div class="screen right" data-font="Aptos Narrow" data-zoom="150%" data-slider="58">
      <header class="title">
        <svg class="logo"><use href="#excel"/></svg>
        <svg class="qa"><use href="#save"/></svg>
        <svg class="qa"><use href="#undo"/></svg><svg class="chev dim"><use href="#chev"/></svg>
        <svg class="qa"><use href="#redo"/></svg><svg class="chev dim"><use href="#chev"/></svg>
        <svg class="custom"><use href="#custom"/></svg>
        <h2>Weekly Report &nbsp;-&nbsp; Excel</h2>
        <label class="search"><svg><use href="#glass"/></svg><input type="text" placeholder="Search" aria-label="Search"></label>
        <span class="avatar">SA</span>
        <button class="win" aria-label="Minimize"><svg><use href="#min"/></svg></button>
        <button class="win" aria-label="Restore"><svg><use href="#max"/></svg></button>
        <button class="win" aria-label="Close"><svg><use href="#close"/></svg></button>
      </header>
      <div data-tpl="tabs"></div>
      <div class="ribbon">
        <div data-tpl="basic"></div>
        <section class="group g-num">
          <div class="group-body stack">
            <div class="row"><select aria-label="Number format"><option>General</option></select></div>
            <div class="row">
              <button class="tool"><span class="sym">$</span></button><svg class="chev"><use href="#chev"/></svg>
              <button class="tool"><span class="sym">%</span></button>
              <button class="tool" aria-label="Comma style"><svg><use href="#comma"/></svg></button>
            </div>
            <div class="row">
              <button class="tool" aria-label="Increase decimal"><svg><use href="#dec-more"/></svg></button>
              <button class="tool" aria-label="Decrease decimal"><svg><use href="#dec-less"/></svg></button>
            </div>
          </div>
          <footer>Number<svg><use href="#launch"/></svg></footer>
        </section>
        <section class="group g-styles">
          <div class="group-body">
            <div class="stack">
              <button class="line"><svg><use href="#cond"/></svg><span>Conditional Formatting</span><svg class="chev"><use href="#chev"/></svg></button>
              <button class="line"><svg><use href="#fmt-table"/></svg><span>Format as Table</span><svg class="chev"><use href="#chev"/></svg></button>
              <button class="line"><svg><use href="#cell-style"/></svg><span>Cell Styles</span><svg class="chev"><use href="#chev"/></svg></button>
            </div>
          </div>
          <footer>Styles</footer>
        </section>
        <div data-tpl="cells"></div>
        <section class="group g-edit">
          <div class="group-body">
            <div class="stack">
              <button class="tool wide" aria-label="AutoSum"><svg><use href="#sum"/></svg><svg class="chev"><use href="#chev"/></svg></button>
              <button class="tool wide" aria-label="Fill"><svg><use href="#filldown"/></svg><svg class="chev"><use href="#chev"/></svg></button>
              <button class="tool wide" aria-label="Clear"><svg><use href="#erase"/></svg><svg class="chev"><use href="#chev"/></svg></button>
            </div>
            <div class="stack">
              <button class="tool wide" aria-label="Sort and filter"><svg><use href="#sort"/></svg><svg class="chev"><use href="#chev"/></svg></button>
              <button class="tool wide" aria-label="Find and select"><svg><use href="#find"/></svg><svg class="chev"><use href="#chev"/></svg></button>
            </div>
          </div>
          <footer>Editing</footer>
        </section>
        <div data-tpl="acrobat"></div>
      </div>
      <div class="formula">
        <div class="namebox"><input type="text" value="K6" aria-label="Name box"><svg><use href="#chev"/></svg></div>
        <span class="grip">⋮</span>
        <div class="fx"><svg><use href="#close"/></svg><svg><use href="#check"/></svg><i>fx</i></div>
        <div class="bar"><input type="text" value="54" aria-label="Formula bar"><svg><use href="#chev"/></svg></div>
      </div>
      <div class="sheet">
        <div class="clip"><table id="report"></table></div>
        <div class="vscroll"><i>▲</i><div class="thumb"></div><i>▼</i></div>
      </div>
      <div class="tabs">
        <span class="nav dim">‹</span><span class="nav dim">›</span>
        <a href="#">Sheet 1</a><a href="#" class="on">Sheet 2</a><a href="#">Sheet 3</a>
        <span class="plus">+</span><span class="grip">⋮</span>
        <div class="hscroll"><i>◀</i><div class="track"><div class="thumb"></div></div><i>▶</i></div>
      </div>
      <div data-tpl="status"></div>
      <div data-tpl="taskbar"></div>
      <aside class="tracker"><p class="work">Working Session</p><p class="act">Active: 02:15</p></aside>
    </div>
  </main>

  <script src="script.js"></script>
</body>
</html>
```

FILE: styles.css
```css
* {
  box-sizing: border-box;
}

body {
  margin: 0;
  background: #000;
  color: #222;
  font-family: "Noto Sans", sans-serif;
  overflow: hidden;
}

h1, h2, p {
  margin: 0;
  font-weight: 400;
}

button, input, select {
  font: inherit;
  color: inherit;
  border: 0;
  background: none;
  padding: 0;
  min-width: 0;
}

input:focus {
  outline: none;
}

a {
  color: inherit;
  text-decoration: none;
}

svg {
  flex: none;
}

.sprite {
  position: absolute;
  width: 0;
  height: 0;
}

.icons {
  display: none;
}

[data-tpl] {
  display: contents;
}

.desktop {
  display: grid;
  grid-template-columns: 1920fr 1366fr;
  align-items: start;
  height: 100vh;
}

.screen {
  position: relative;
  display: flex;
  flex-direction: column;
  min-width: 0;
  overflow: hidden;
}

/* Sizes of the two screens */
.left {
  --title: 60px;
  --menu: 38px;
  --ribbon: 124px;
  --gap: 10px;
  --tool: 32px;
  --icon: 20px;
  --chev: 12px;
  --row: 40px;
  --stack: 32px;
  --bigicon: 36px;
  --line: 20px;
  --text: 14px;
  --label: 13px;
  --menutext: 16px;
  --app: 55px;
  --appicon: 40px;
  height: 100vh;
  background: linear-gradient(90deg, #e9e6e8 0, #ece6e8 34%, #e9e8e9 50%, #e9e6e7 80%, #efe6ea 88%);
}

.right {
  --title: 48px;
  --menu: 30px;
  --ribbon: 100px;
  --gap: 8px;
  --tool: 26px;
  --icon: 16px;
  --chev: 10px;
  --row: 32px;
  --stack: 26px;
  --bigicon: 28px;
  --line: 16px;
  --text: 11px;
  --label: 11px;
  --menutext: 12px;
  --app: 44px;
  --appicon: 32px;
  background: #efefef;
}

.chev {
  width: var(--chev);
  height: var(--chev);
}

.dim {
  opacity: .4;
}

/* Title bar */
.title {
  display: flex;
  align-items: center;
  height: var(--title);
  flex: none;
}

.left .title { padding-left: 20px; }
.right .title { padding: 0 2px 0 16px; color: #b0b0b0; }

.logo { width: 22px; height: 22px; margin-right: 18px; }
.qa { width: 20px; height: 20px; margin-right: 3px; fill: none; }
.save { color: #8a3fa0; margin-right: 15px; fill: #c77be0; }
.title .chev { margin-right: 9px; }
.custom { width: 14px; height: 14px; margin: 0 18px 0 10px; }
.title h1 { font-size: 14px; width: 516px; white-space: nowrap; }

.right .logo { width: 17px; height: 17px; margin-right: 15px; }
.right .qa { width: 16px; height: 16px; margin-right: 2px; }
.right .logo + .qa { margin-right: 12px; }
.right .title .chev { margin-right: 8px; }
.right .custom { width: 12px; height: 12px; margin: 0 14px 0 8px; }
.right h2 { font-size: 12px; width: 325px; white-space: nowrap; }

.search {
  display: flex;
  align-items: center;
  gap: 16px;
  flex: 0 0 459px;
  height: 37px;
  padding: 0 16px;
  background: #fafafa;
  border-radius: 4px;
  box-shadow: 0 1px 3px rgba(0, 0, 0, .3);
  font-size: 16px;
  color: #555;
}

.right .search { flex: 0 0 367px; height: 32px; font-size: 12px; background: #efefef; box-shadow: 0 0 2px rgba(0, 0, 0, .4); color: #aaa; gap: 13px; padding: 0 13px; }
.search svg { width: 20px; height: 20px; }
.right .search svg { width: 16px; height: 16px; }
.search input::placeholder { color: inherit; opacity: 1; }

.avatar { width: 30px; height: 30px; margin: 0 14px 0 auto; }
.right .avatar { width: 24px; height: 24px; border-radius: 50%; background: #5f6b70; color: #fff; font-size: 10px; line-height: 24px; text-align: center; margin-right: 12px; }
.win { width: 60px; height: 40px; }
.win svg { width: 16px; height: 16px; }
.right .win { width: 48px; height: 32px; }
.right .win svg { width: 13px; height: 13px; }

/* Menu row */
.menu {
  display: flex;
  align-items: center;
  height: var(--menu);
  flex: none;
  font-size: var(--menutext);
  padding: 0 16px 0 26px;
  gap: 25px;
  white-space: nowrap;
}

.right .menu { padding: 0 12px 0 22px; gap: 19px; }
.menu .on { font-weight: 600; border-bottom: 3px solid #1e7145; line-height: 25px; margin: 3px -2px 0 8px; }
.right .menu .on { border-bottom-width: 2px; line-height: 20px; margin: 2px 0 0 8px; }

.share {
  display: flex;
  align-items: center;
  justify-content: space-between;
  width: 90px;
  height: 30px;
  padding: 0 6px;
  margin-left: auto;
  background: #107c41;
  color: #fff;
  border-radius: 4px;
  font-weight: 500;
}

.share svg { width: 14px; height: 14px; }
.share .white { width: 10px; height: 10px; filter: invert(1); }
.right .share { width: 71px; height: 24px; padding: 0 4px; }

/* Ribbon */
.ribbon {
  display: flex;
  flex: none;
  height: var(--ribbon);
  margin: 0 var(--gap);
  padding-top: 6px;
  background: #fff;
  border-radius: 8px;
  box-shadow: 0 1px 3px rgba(0, 0, 0, .3);
}

.right .ribbon { padding-top: 4px; }

.group {
  display: flex;
  flex-direction: column;
  justify-content: space-between;
  min-width: 0;
  border-right: 1px solid #d4d4d4;
  margin-bottom: 7px;
  font-size: var(--text);
}

.right .group { margin-bottom: 5px; }

.left .g-clip { flex: 0 0 139px; }
.left .g-font { flex: 0 0 292px; }
.left .g-align { flex: 0 0 253px; }
.left .g-num { flex: 0 0 200px; }
.left .g-styles { flex: 0 0 246px; }
.left .g-cells { flex: 0 0 136px; }
.left .g-edit { flex: 0 0 197px; }
.left .g-addins { flex: 0 0 78px; }
.left .g-acro { flex: 0 0 244px; }
.right .g-clip { flex: 0 0 111px; }
.right .g-font { flex: 0 0 236px; }
.right .g-align { flex: 0 0 205px; }
.right .g-num { flex: 0 0 107px; }
.right .g-styles { flex: 0 0 184px; }
.right .g-cells { flex: 0 0 106px; }
.right .g-edit { flex: 0 0 106px; }
.right .g-addins { flex: 0 0 63px; }
.right .g-acro { flex: 0 0 195px; }

.group-body { display: flex; padding: 0 8px; }
.left .rows { padding-top: 3px; }
.right .rows { padding-top: 4px; }
.row { display: flex; align-items: center; height: var(--row); }
.group-body.rows, .stack { display: flex; flex-direction: column; }
.stack .row, .stack > button { height: var(--stack); }
.left .stack { margin-top: -2px; }
.right .stack { margin-top: -1px; }
.row .chev, .tool .chev { margin: 0 3px; }

.row hr {
  width: 1px;
  height: 30px;
  margin: 0 2px;
  border: 0;
  background: #d4d4d4;
}

.right .row hr { height: 25px; }
.right .g-font .group-body { padding-left: 9px; }

.group footer {
  position: relative;
  text-align: center;
  font-size: var(--label);
  line-height: 16px;
}

.right .group footer { line-height: 14px; }
.group footer svg { position: absolute; right: 4px; bottom: 1px; width: 12px; height: 12px; }
.right .group footer svg { right: 3px; width: 10px; height: 10px; }
.left .group footer:has(svg) { padding-right: 22px; }
.right .group footer:has(svg) { padding-right: 14px; }

.tool {
  display: flex;
  align-items: center;
  justify-content: center;
  flex: none;
  width: var(--tool);
  height: 30px;
  font-size: 18px;
  color: #444;
}

.right .tool { font-size: 14px; height: 24px; }
.tool svg { width: var(--icon); height: var(--icon); }
.tool .chev { width: var(--chev); height: var(--chev); }
.tool.on { background: #e6e6e6; border: 1px solid #777; border-radius: 5px; width: 30px; margin: 0 1px; }
.right .tool.on { width: 24px; }
.tool.wide { width: auto; justify-content: flex-start; padding-left: 6px; }
.right .tool.wide { padding-left: 4px; }
.tool i { font-family: "Liberation Serif", serif; }
.ink { border-bottom: 5px solid #f00000; line-height: 18px; padding: 0 4px; }
.right .ink { line-height: 14px; border-bottom-width: 4px; padding: 0 3px; }
.sym { font-size: 22px; }
.right .sym { font-size: 18px; }
.left .g-num .tool { width: 30px; }
.left .g-num .row .chev { margin: 0 5px; }
.right .g-num .tool { width: 24px; }

select {
  appearance: none;
  height: 30px;
  padding: 0 3px;
  border: 1px solid #777;
  border-radius: 5px;
  background: url("data:image/svg+xml,%3Csvg xmlns='http://www.w3.org/2000/svg' viewBox='0 0 10 10'%3E%3Cpath d='M2 3.5 5 6.5 8 3.5' fill='none' stroke='%23333' stroke-width='1.3'/%3E%3C/svg%3E") no-repeat right 2px center / 11px 11px #fff;
}

.right select { height: 24px; font-size: 12px; }
.font-name { width: 142px; margin-right: 3px; }
.font-size { width: 62px; margin-right: 2px; }
.right .font-name { width: 116px; }
.right .font-size { width: 48px; }
.g-num select { width: 180px; }
.right .g-num select { width: 90px; }

.g-align .rows:first-child { width: 168px; flex: none; }
.right .g-align .rows:first-child { width: 134px; }
.wraps { border-left: 1px solid #d4d4d4; padding-left: 6px; }
.right .wraps { padding-left: 4px; }

.big {
  display: flex;
  flex-direction: column;
  align-items: center;
  flex: none;
  line-height: var(--line);
  padding-top: 6px;
  gap: 3px;
  white-space: nowrap;
}

.left .big { height: 90px; }
.right .big { padding-top: 5px; }
.big svg { width: var(--bigicon); height: var(--bigicon); }
.big .chev { width: var(--chev); height: var(--chev); }
.g-clip .big { width: 64px; }
.g-clip .big > .chev { margin-top: -2px; }
.right .g-clip .big { width: 46px; }
.left .g-styles .group-body { padding: 0 4px; }
.left .g-styles .big:nth-child(1) { width: 102px; }
.left .g-styles .big:nth-child(2) { width: 70px; }
.left .g-styles .big:nth-child(3) { width: 64px; }
.left .g-edit .stack { width: 62px; }
.left .g-edit .big { width: 58px; }
.right .g-edit .stack { width: 50px; }
.g-addins .group-body { justify-content: center; padding: 0; }
.g-acro .group-body { justify-content: space-evenly; padding: 0 6px; }
.right .g-acro .group-body { padding: 0 2px; }

.line {
  display: flex;
  align-items: center;
  gap: 6px;
  white-space: nowrap;
}

.line svg { width: var(--icon); height: var(--icon); }
.line .chev { width: var(--chev); height: var(--chev); }
.left .g-cells .group-body { padding-left: 14px; }
.right .g-cells .group-body { padding-left: 12px; }
.right .g-styles .group-body { padding-left: 12px; }
.right .line { gap: 4px; }
.g-cells .line span { min-width: 52px; text-align: left; }
.right .g-cells .line span { min-width: 42px; }

.collapse { margin: 0 10px 8px auto; align-self: flex-end; }
.collapse svg, .formula .bar svg, .namebox svg { width: 18px; height: 18px; }
.right .collapse svg, .right .bar svg, .right .namebox svg { width: 15px; height: 15px; }

/* Formula bar */
.formula {
  display: flex;
  align-items: center;
  flex: none;
  height: 48px;
  padding: 0 10px;
  font-size: 16px;
}

.right .formula { height: 42px; padding: 0 8px; font-size: 12px; }

.namebox, .fx, .bar {
  display: flex;
  align-items: center;
  height: 29px;
  background: #fff;
  border-radius: 5px;
  box-shadow: 0 0 2px rgba(0, 0, 0, .3);
}

.right .namebox, .right .fx, .right .bar { height: 25px; }
.namebox { width: 127px; padding: 0 4px 0 7px; }
.namebox input, .bar input { flex: 1; }
.formula .grip { width: 26px; text-align: center; }
.fx { width: 90px; justify-content: space-between; padding: 0 6px; margin-right: 7px; }
.fx svg { width: 18px; height: 18px; color: #aaa; }
.fx i { font-family: "Liberation Serif", serif; font-size: 22px; line-height: 24px; }
.bar { flex: 1; padding: 0 2px 0 13px; }
.right .namebox { width: 100px; }
.right .formula .grip { width: 22px; }
.right .fx { width: 72px; margin-right: 6px; }
.right .fx svg { width: 15px; height: 15px; }
.right .fx i { font-size: 20px; }
.right .bar { padding-left: 11px; }

/* Grid */
.sheet {
  display: flex;
  flex: 1;
  min-height: 0;
  overflow: hidden;
}

.right .sheet { flex: 0 0 446px; }
.clip { flex: 1; overflow: hidden; background: #fff; }

table {
  border-collapse: collapse;
  table-layout: fixed;
  width: 0;
}

th, td {
  padding: 0 3px;
  text-align: center;
  white-space: nowrap;
  overflow: hidden;
  font-weight: 400;
}

thead th { background: #efefef; border-right: 1px solid #d6d6d6; border-bottom: 1px solid #9a9a9a; color: #444; }
tbody th { background: #efefef; border-right: 1px solid #9a9a9a; border-bottom: 1px solid #dcdcdc; color: #555; }
thead .sel { background: #dedede; color: #107c41; border-bottom: 2px solid #1e7145; }
tbody .sel { background: #dedede; color: #107c41; border-right: 2px solid #1e7145; }
.corner { position: relative; }
.corner::after { content: ""; position: absolute; right: 3px; bottom: 3px; border: 8px solid transparent; border-right-color: #d8d8d8; border-bottom-color: #d8d8d8; }

#orders { font-size: 18px; }
#orders tr { height: 26px; }
#orders thead tr { height: 25px; }
#orders th { font-size: 17px; line-height: 24px; padding: 0; }
#orders td { line-height: 24px; border: 1px solid #000; color: #111; }
#orders td.date { font-size: 17px; }
#orders td.none { border-top-color: #d4e2da; border-bottom-color: #d4e2da; }
#orders td.start { text-align: left; border-bottom-color: #ddd; }
#orders td.end { text-align: right; border-right-color: #ddd; border-bottom-color: #ddd; }
#orders td.current { outline: 2px solid #1e7145; outline-offset: -2px; }
#orders td.yellow { background: #ff0; }
#orders td.red { background: #f00; color: #5a0000; }
#orders td.orange { background: #ffc000; }
#orders td.grey { background: #efefef; }

#report { font-family: "Liberation Sans", sans-serif; font-size: 20px; }
#report tr { height: 30px; }
#report thead tr { height: 27px; }
#report tr.low { height: 29px; }
#report th { font-size: 18px; line-height: 24px; }
#report td { line-height: 26px; border: 1px solid #dcdcdc; color: #111; }
#report td.box { border: 2px solid #000; }
#report td.head { background: #a6c9ec; font-family: "Liberation Serif", serif; font-size: 21px; font-weight: 700; }
#report td.end { text-align: right; }

.vscroll {
  display: flex;
  flex-direction: column;
  align-items: center;
  justify-content: space-between;
  width: 25px;
  background: #f2f0f1;
  color: #666;
}

.vscroll i, .hscroll i { font-style: normal; font-size: 12px; line-height: 24px; }
.vscroll .thumb { width: 10px; height: 34px; margin-top: 30px; border-radius: 5px; background: #6f6f6f; }
.right .vscroll { width: 22px; justify-content: flex-start; }
.right .vscroll .thumb { width: 8px; height: 292px; margin-top: 54px; margin-bottom: auto; }

/* Sheet tabs */
.tabs {
  display: flex;
  align-items: center;
  flex: none;
  height: 38px;
  padding-left: 15px;
  font-size: 16px;
  white-space: nowrap;
  background: linear-gradient(90deg, #e0e5e9 0, #dfe6ea 25%, #eee8ea 50%, #efe6ea 80%, #e6e8ea 100%);
}

.tabs a { padding: 0 17px; border-right: 1px solid #ccc; line-height: 24px; }
.tabs .on { background: #fff; font-weight: 600; border: 0; border-radius: 0 0 5px 5px; align-self: flex-start; padding: 0 9px 5px; margin: 0 8px; text-decoration: underline #1e7145 3px; text-underline-offset: 5px; height: 34px; line-height: 30px; }
.tabs a:last-of-type { border: 0; }
.nav { width: 41px; text-align: center; font-size: 26px; line-height: 30px; }
.nav + a { margin-left: 39px; }
.dots { width: 30px; font-weight: 700; }
.plus { width: 50px; text-align: center; font-size: 24px; line-height: 24px; }
.tabs .grip { width: 30px; text-align: center; font-weight: 700; }
.hscroll { display: flex; align-items: center; flex: 1; height: 24px; padding: 0 4px; margin: 0 24px 0 6px; background: #f4f3f4; border-radius: 12px; color: #666; }
.track { flex: 1; margin: 0 6px; }
.track .thumb { width: 84%; height: 12px; border-radius: 6px; background: #6f6f6f; }

.right .tabs { height: 31px; font-size: 13px; background: #ececec; }
.right .tabs a { padding: 0 16px; line-height: 20px; }
.right .tabs .on { padding: 0 8px; margin: 0 5px; height: 28px; line-height: 24px; text-decoration-thickness: 2px; }
.right .nav { width: 33px; font-size: 22px; }
.right .nav + a { margin-left: 26px; }
.right .plus { width: 88px; font-size: 20px; }
.right .tabs .grip { margin-left: auto; }
.right .hscroll { flex: 0 0 516px; margin-right: 12px; background: #f4f4f4; height: 18px; }
.right .track .thumb { width: 72%; height: 9px; margin-left: auto; }

/* Status bar */
.status {
  display: flex;
  align-items: center;
  flex: none;
  height: 28px;
  padding: 0 12px 0 15px;
  font-size: 12px;
  background: #f5f5f5;
  border-bottom: 1px solid #b5b5b5;
}

.status > svg { width: 18px; height: 18px; margin: 0 4px 0 25px; }
.display { display: flex; align-items: center; gap: 3px; margin: 0 25px 0 auto; }
.display svg, .view svg { width: 18px; height: 18px; }
.view { width: 50px; height: 28px; display: grid; place-items: center; }
.view.on { background: #dedede; }
.status .sign { width: 22px; text-align: center; font-size: 18px; line-height: 20px; }
.status .pct { width: 42px; text-align: right; }

input[type="range"] { appearance: none; width: 125px; height: 20px; margin: 0; background: linear-gradient(#666, #666) center / 100% 1px no-repeat; }
input[type="range"]::-webkit-slider-thumb { appearance: none; width: 5px; height: 15px; background: #555; }

.right .status { height: 24px; font-size: 11px; padding: 0 8px 0 12px; }
.right .status b { font-size: 10px; }
.right .status > svg { width: 14px; height: 14px; margin-left: 18px; }
.right .display svg, .right .view svg { width: 15px; height: 15px; }
.right .display { margin-right: 18px; }
.right .view { width: 40px; height: 23px; }
.right input[type="range"] { width: 100px; }
.right .status .sign { width: 20px; }
.right .status .pct { width: 34px; }

/* Taskbar */
.taskbar {
  display: flex;
  align-items: center;
  flex: none;
  height: 60px;
  padding-right: 24px;
  background: #ececed;
  font-size: 14px;
}

.right .taskbar { height: 47px; font-size: 11px; padding-right: 19px; }
.weather { display: flex; align-items: center; gap: 4px; width: 363px; padding-left: 23px; line-height: 20px; }
.weather span { color: #666; }
.weather svg { width: 38px; height: 38px; margin-bottom: 10px; }
.right .weather { width: 219px; padding-left: 16px; line-height: 16px; gap: 2px; }
.right .weather svg { width: 32px; height: 32px; margin-bottom: 6px; }

.app {
  position: relative;
  display: grid;
  place-items: center;
  width: var(--app);
  height: 100%;
  flex: none;
}

.app svg { position: relative; width: var(--appicon); height: var(--appicon); }
.run::after { content: ""; position: absolute; bottom: 6px; left: 50%; width: 8px; height: 4px; margin-left: -4px; border-radius: 2px; background: #888; }
.right .run::after { bottom: 4px; height: 3px; }
.active::before, .alert::before { content: ""; position: absolute; inset: 5px 3px; border-radius: 5px; background: #fafafa; }
.alert::before { background: #e8aaa8; }
.active::after { width: 20px; margin-left: -10px; background: #0f6cbd; }
.alert::after { width: 40px; margin-left: -20px; background: #c42b2b; }
.right .active::after { width: 16px; margin-left: -8px; }
.right .alert::after { width: 32px; margin-left: -16px; }
.right .active::before, .right .alert::before { inset: 3px 2px; }

.tb-search { display: flex; align-items: center; flex: none; width: 271px; height: 39px; margin: 0 4px 0 5px; padding: 0 5px 0 13px; gap: 12px; background: #fafafa; border-radius: 20px; box-shadow: 0 1px 2px rgba(0, 0, 0, .25); font-size: 16px; color: #666; }
.tb-search svg { width: 19px; height: 19px; }
.tb-search .faces { width: 58px; height: 30px; }
.tb-search input { flex: 1; }
.tb-search input::placeholder { color: #666; opacity: 1; }
.right .tb-search { width: 218px; height: 31px; margin: 0 2px 0 4px; padding: 0 4px 0 10px; gap: 10px; font-size: 13px; }
.right .tb-search svg { width: 16px; height: 16px; }
.right .tb-search .faces { width: 46px; height: 24px; }

.tray { display: flex; gap: 17px; margin-left: auto; }
.tray svg { width: 20px; height: 20px; }
.tray svg:nth-child(-n+3) { margin-right: 2px; }
.tray svg:nth-child(n+4) { margin-right: -6px; }
.right .tray { display: none; }
.clock { margin-left: 32px; text-align: right; line-height: 20px; white-space: nowrap; }
.right .clock { line-height: 16px; margin-left: auto; }

/* Time tracker lying over the corner of the desktop */
.tracker {
  position: absolute;
  right: 0;
  bottom: 0;
  width: 72px;
  height: 85px;
  padding: 31px 0 0 4px;
  background: rgba(45, 45, 45, .8);
  color: #fff;
  font-size: 12px;
  white-space: nowrap;
  overflow: hidden;
}

.tracker p { font-weight: 600; padding-left: 10px; height: 26px; line-height: 26px; margin-bottom: 3px; }
.work { background: rgba(110, 200, 210, .9); }
.act { background: rgba(85, 215, 140, .92); }
```

FILE: script.js
```js
// Clone the shared parts into both screens
document.querySelectorAll("[data-tpl]").forEach(slot => {
  const tpl = document.getElementById("tpl-" + slot.dataset.tpl);
  slot.appendChild(tpl.content.cloneNode(true));
});

document.querySelectorAll(".screen").forEach(screen => {
  screen.querySelector(".pct").textContent = screen.dataset.zoom;
  screen.querySelector("input[type=range]").value = screen.dataset.slider;
  if (screen.dataset.font) {
    screen.querySelector(".font-name option").textContent = screen.dataset.font;
  }
});

function header(widths, letters, selected) {
  const cols = widths.map(w => `<col style="width:${w}px">`).join("");
  const cells = letters.map(l => `<th class="${l === selected ? "sel" : ""}">${l}</th>`).join("");
  return `<colgroup>${cols}</colgroup><thead><tr><th class="corner"></th>${cells}</tr></thead>`;
}

// id, status, date, second id, fill of the id cell (defaults to the fill of the status)
const orders = [
  ["00524", "Shipped", "7/8", "01215"],
  ["00525", "Invoice", "7/8", "01223"],
  ["00528", "cancelled", "7/8", "01227"],
  ["00530", "Invoice", "7/8", "01278"],
  ["00533", "Invoice", "7/8", "01301"],
  ["00536", "Invoice", "7/8", "01372"],
  ["00731", "Shipped", "7/9", "01373"],
  ["00783", "Invoice", "7/10", "01693"],
  ["00794", "Invoice", "7/10", "01703"],
  ["00858", "Invoice", "7/11", "01741"],
  ["00889", "Invoice", "7/11", "01755"],
  ["00925", "Invoice", "7/11", "01768"],
  ["00964", "Invoice", "7/11", "01802"],
  ["00973", "Shipped", "7/11", "01812"],
  ["01014", "Invoice", "7/14", "01836"],
  ["01031", "Backorder", "7/14", "01847"],
  ["01042", "Shipped", "7/14", "01888"],
  ["AZ01104", "Invoice", "7/14", "01896"],
  ["01105", "Shipped", "7/14", "01946"],
  ["01073-1", "Invoice", "7/14", "01970", ""],
  ["01122", "Shipped", "7/14", "01983"],
  ["01125", "Shipped", "7/14", "02021"],
  ["01128", "Invoice", "7/14", "02048", ""],
  ["01130", "Shipped", "7/14", "02060"],
  ["01133", "Shipped", "7/14", "02062"],
  ["01207", "Shipped", "7/15", "02080"]
];
const fills = { Invoice: "yellow", cancelled: "red", Backorder: "orange" };

const orderRows = orders.map(([id, status, date, id2, idFill], i) => {
  const n = 227 + i;
  const fill = fills[status] || "";
  const bad = n === 242;
  const loose = n > 250;
  return `<tr>
    <th class="${n === 238 ? "sel" : ""}">${n}</th>
    <td class="${idFill ?? fill} ${loose ? "start" : ""}">US-Q3-25-${id}-P</td>
    <td>VCloud Choice</td><td>Synnex Choice</td>
    <td class="${fill}">${status}</td><td>-</td>
    <td class="date ${loose ? "end" : ""} ${n === 238 ? "current" : ""}">${date}/2025</td>
    <td class="none"></td>
    <td class="${bad ? "red" : n === 239 ? "grey" : ""}">US-Q2-25-AZ${id2}-P</td>
    <td>VCloud Tech</td><td>Synnex Tech</td>
    <td class="${bad ? "red" : ""}">${bad ? "Cancelled" : "Shipped"}</td>
  </tr>`;
}).join("");
document.getElementById("orders").innerHTML =
  header([36, 244, 172, 174, 188, 146, 166, 88, 232, 165, 163, 165], [..."ABCDEFGHIJK"], "F") +
  `<tbody>${orderRows}</tbody>`;

const report = [
  ["Order Status", "Monday", "Tuesday", "Wednesday", "Thursday", "Friday", "Weekly Total"],
  ["Placed", 51, 47, 80, 59, 58, 236],
  ["Shipped", 51, 36, 79, 54, 15, 67],
  ["Invoiced", 0, 7, 0, 2, 4, 6],
  ["Delivered", 0, 0, 0, 0, 0, 0],
  ["Backordered", 0, 0, 0, 0, 0, 0],
  ["Pending", "0 (DS)", "1 (DS)", "1 (DS)", "1 (DS)", "37 (DS)", 214],
  ["Cancelled", 0, 2, 0, 0, 0, 0],
  ["Follow Ups", 0, 1, 0, 0, 1, 2],
  ["Responses", 0, 1, 0, 0, 1, 2],
  ["Total", "", "", "", "", "", ""],
  ["", "7/7/2025", "7/8/2025", "7/9/2025", "7/10/2025", "7/11/2025", ""],
  ["", "", "", "", "", "", ""],
  ["", "", "", "", "", "", ""]
];

const reportRows = report.map((row, r) => {
  const cells = row.map((v, c) => {
    if (r > 10) return `<td class="end">${v}</td>`;
    return `<td class="box ${r === 0 || c === 0 ? "head" : ""}">${v}</td>`;
  }).join("");
  return `<tr class="${r > 10 ? "low" : ""}"><th>${r + 4}</th><td></td><td></td>${cells}<td></td><td></td></tr>`;
}).join("");
document.getElementById("report").innerHTML =
  header([40, 95, 96, 165, 137, 134, 134, 119, 131, 156, 97, 60], [..."EFGHIJKLMN", ""]) +
  `<tbody>${reportRows}</tbody>`;
```
